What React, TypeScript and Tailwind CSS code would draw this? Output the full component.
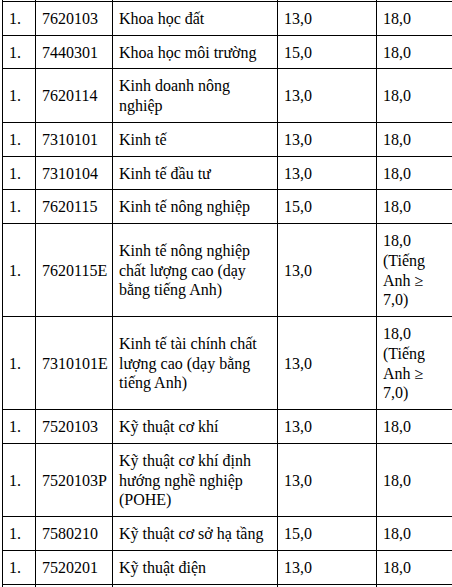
import React from "react";

type Row = { n: string; code: string; name: string; a: string; b: string };

const rows: Row[] = [
  { n: "1.", code: "7620110", name: "Khoa học cây trồng", a: "15,0", b: "18,0" },
  { n: "1.", code: "7620103", name: "Khoa học đất", a: "13,0", b: "18,0" },
  { n: "1.", code: "7440301", name: "Khoa học môi trường", a: "15,0", b: "18,0" },
  { n: "1.", code: "7620114", name: "Kinh doanh nông nghiệp", a: "13,0", b: "18,0" },
  { n: "1.", code: "7310101", name: "Kinh tế", a: "13,0", b: "18,0" },
  { n: "1.", code: "7310104", name: "Kinh tế đầu tư", a: "13,0", b: "18,0" },
  { n: "1.", code: "7620115", name: "Kinh tế nông nghiệp", a: "15,0", b: "18,0" },
  {
    n: "1.",
    code: "7620115E",
    name: "Kinh tế nông nghiệp chất lượng cao (dạy bằng tiếng Anh)",
    a: "13,0",
    b: "18,0 (Tiếng Anh ≥ 7,0)",
  },
  {
    n: "1.",
    code: "7310101E",
    name: "Kinh tế tài chính chất lượng cao (dạy bằng tiếng Anh)",
    a: "13,0",
    b: "18,0 (Tiếng Anh ≥ 7,0)",
  },
  { n: "1.", code: "7520103", name: "Kỹ thuật cơ khí", a: "13,0", b: "18,0" },
  {
    n: "1.",
    code: "7520103P",
    name: "Kỹ thuật cơ khí định hướng nghề nghiệp (POHE)",
    a: "13,0",
    b: "18,0",
  },
  { n: "1.", code: "7580210", name: "Kỹ thuật cơ sở hạ tầng", a: "15,0", b: "18,0" },
  { n: "1.", code: "7520201", name: "Kỹ thuật điện", a: "13,0", b: "18,0" },
  { n: "1.", code: "7520114", name: "Kỹ thuật cơ điện tử", a: "13,0", b: "18,0" },
];

const td = "border border-black pl-[6px] pr-[5px] pt-[7px] pb-[6px] align-middle";

export default function App() {
  return (
    <div className="w-[452px] h-[587px] overflow-hidden bg-white">
      <table className="ml-[2px] -mt-[33px] w-[453px] border-collapse table-fixed text-black text-[16px] leading-[19.75px] font-['Liberation_Serif','Times_New_Roman',serif]">
        <colgroup>
          <col className="w-[33px]" />
          <col className="w-[77px]" />
          <col className="w-[165px]" />
          <col className="w-[99px]" />
          <col className="w-[79px]" />
        </colgroup>
        <tbody>
          {rows.map((r, i) => (
            <tr key={i}>
              <td className={td}>{r.n}</td>
              <td className={td}>{r.code}</td>
              <td className={td}>{r.name}</td>
              <td className={td}>{r.a}</td>
              <td className={td}>{r.b}</td>
            </tr>
          ))}
        </tbody>
      </table>
    </div>
  );
}
